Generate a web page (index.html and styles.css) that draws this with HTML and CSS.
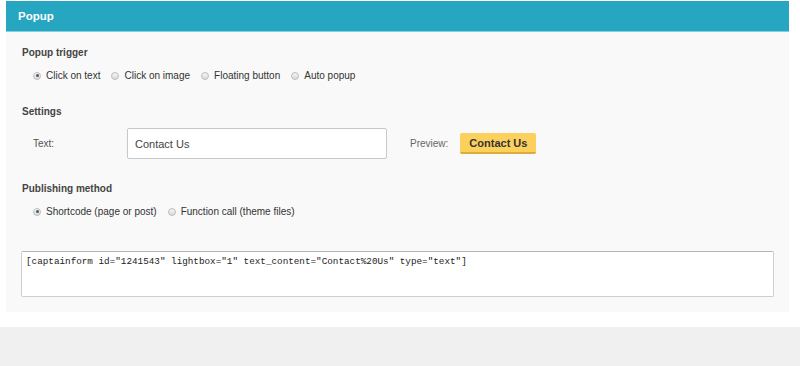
FILE: index.html
```html
<!DOCTYPE html>
<html lang="en">
<head>
    <meta charset="UTF-8">
    <title>Popup</title>
    <link rel="stylesheet" href="styles.css">
</head>
<body>
    <div class="panel">
        <div class="panel-head">Popup</div>
        <div class="panel-body">
            <h4>Popup trigger</h4>
            <div class="radios">
                <label><span class="radio checked"></span>Click on text</label>
                <label><span class="radio"></span>Click on image</label>
                <label><span class="radio"></span>Floating button</label>
                <label><span class="radio"></span>Auto popup</label>
            </div>

            <h4 class="settings-title">Settings</h4>
            <div class="settings">
                <span class="field-label">Text:</span>
                <input class="text-input" type="text" value="Contact Us">
                <span class="preview-label">Preview:</span>
                <span class="preview-btn">Contact Us</span>
            </div>

            <h4>Publishing method</h4>
            <div class="radios">
                <label><span class="radio checked"></span>Shortcode (page or post)</label>
                <label><span class="radio"></span>Function call (theme files)</label>
            </div>

            <textarea class="code">[captainform id="1241543" lightbox="1" text_content="Contact%20Us" type="text"]</textarea>
        </div>
    </div>
    <div class="footer"></div>
</body>
</html>
```

FILE: styles.css
```css
html, body {
    margin: 0;
    padding: 0;
    background: #fff;
    font-family: "Liberation Sans", Arial, sans-serif;
    color: #333;
    height: 366px;
    overflow: hidden;
}
.panel {
    margin: 1px 11px 0 6px;
}
.panel-head {
    height: 30px;
    line-height: 30px;
    background: #26a6c1;
    border-bottom: 1px solid #7fd0e0;
    color: #fff;
    font-weight: bold;
    font-size: 11.5px;
    padding-left: 12px;
}
.panel-body {
    background: #f9f9f9;
    padding: 14px 15px 15px 16px;
    height: 251px;
}
h4 {
    margin: 0;
    font-size: 10px;
    font-weight: bold;
    color: #444;
    line-height: 13px;
}
.radios {
    display: flex;
    gap: 11px;
    margin: 10px 0 0 11px;
    font-size: 10px;
    color: #333;
    line-height: 13px;
}
.radios label {
    display: flex;
    align-items: center;
}
.radio {
    width: 8px;
    height: 8px;
    border-radius: 50%;
    border: 1px solid #bcbcbc;
    background: linear-gradient(#f6f6f6, #dadada);
    margin-right: 5px;
    box-sizing: border-box;
    position: relative;
}
.radio.checked::after {
    content: "";
    position: absolute;
    left: 1.5px;
    top: 1.5px;
    width: 3px;
    height: 3px;
    border-radius: 50%;
    background: #555;
}
.settings-title {
    margin-top: 23px;
}
.settings {
    display: flex;
    align-items: center;
    margin: 10px 0 23px 11px;
    font-size: 10px;
}
.field-label {
    color: #555;
    width: 94px;
}
.text-input {
    width: 260px;
    height: 31px;
    box-sizing: border-box;
    border: 1px solid #c8c8c8;
    border-radius: 2px;
    background: #fff;
    padding: 0 7px;
    font-family: "Liberation Sans", Arial, sans-serif;
    font-size: 11px;
    color: #444;
    margin: 0;
}
.preview-label {
    color: #666;
    margin-left: 23px;
}
.preview-btn {
    margin-left: 12px;
    background: #fcd05c;
    border-bottom: 2px solid #d9ac3c;
    border-radius: 2px;
    height: 19px;
    line-height: 20px;
    padding: 0 9px;
    font-weight: bold;
    font-size: 11px;
    color: #333;
}
.code {
    display: block;
    margin-top: 33px;
    margin-left: -1px;
    width: 753px;
    height: 46px;
    box-sizing: border-box;
    border: 1px solid #cfcfcf;
    border-top-color: #b5b5b5;
    border-radius: 2px;
    background: #fff;
    resize: none;
    padding: 4px 4px;
    font-family: "Liberation Mono", "Courier New", monospace;
    font-size: 9.3px;
    color: #222;
    outline: none;
}
.footer {
    margin-top: 15px;
    height: 40px;
    background: #f0f0f0;
}
```
